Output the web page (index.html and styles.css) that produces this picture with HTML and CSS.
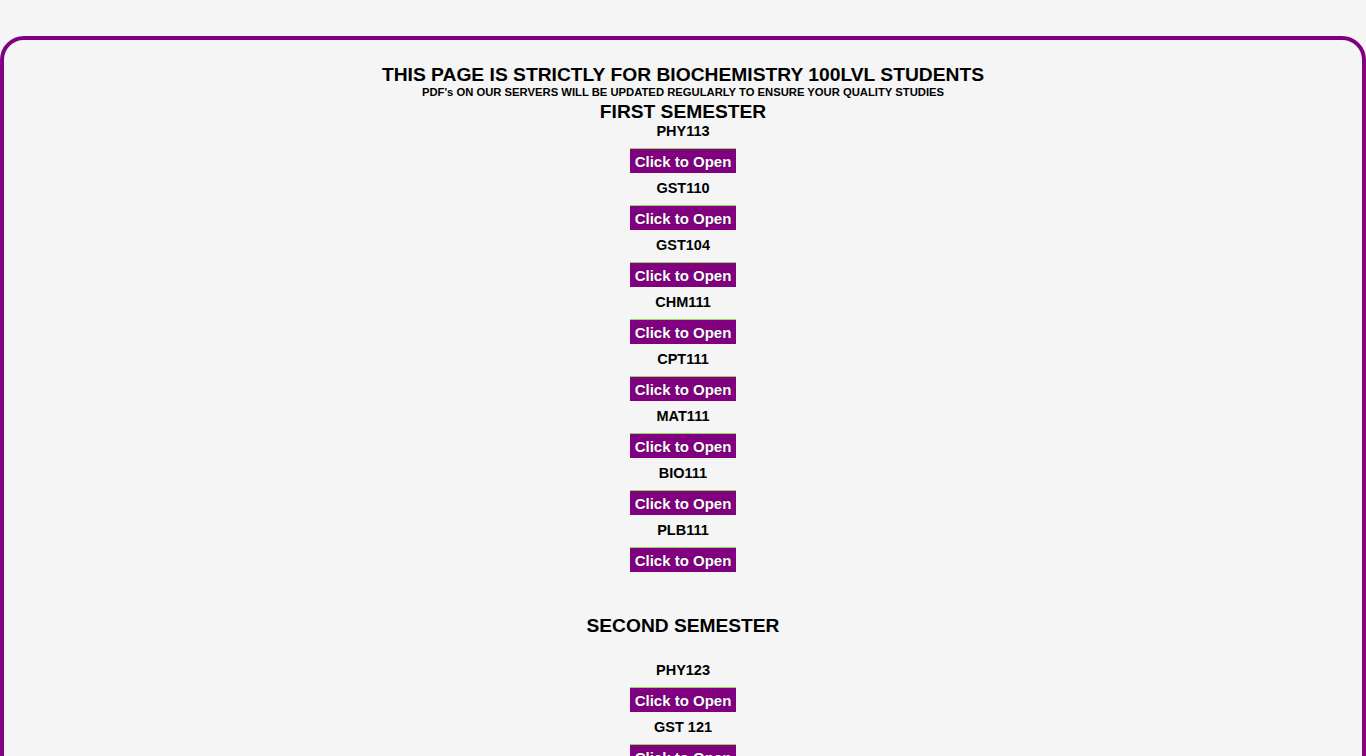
FILE: index.html
```html
<!DOCTYPE html>
<html>
<head>
<meta charset="utf-8">
<link rel="stylesheet" href="styles.css">
</head>
<body>
<div class="frame">
  <h1 class="title">THIS PAGE IS STRICTLY FOR BIOCHEMISTRY 100LVL STUDENTS</h1>
  <p class="sub">PDF's ON OUR SERVERS WILL BE UPDATED REGULARLY TO ENSURE YOUR QUALITY STUDIES</p>
  <h2 class="sem">FIRST SEMESTER</h2>
  <div class="list">
    <div class="item"><div class="code">PHY113</div><a class="btn" href="#">Click to Open</a></div>
    <div class="item"><div class="code">GST110</div><a class="btn" href="#">Click to Open</a></div>
    <div class="item"><div class="code">GST104</div><a class="btn" href="#">Click to Open</a></div>
    <div class="item"><div class="code">CHM111</div><a class="btn" href="#">Click to Open</a></div>
    <div class="item"><div class="code">CPT111</div><a class="btn" href="#">Click to Open</a></div>
    <div class="item"><div class="code">MAT111</div><a class="btn" href="#">Click to Open</a></div>
    <div class="item"><div class="code">BIO111</div><a class="btn" href="#">Click to Open</a></div>
    <div class="item"><div class="code">PLB111</div><a class="btn" href="#">Click to Open</a></div>
  </div>
  <h2 class="sem second">SECOND SEMESTER</h2>
  <div class="list list2">
    <div class="item"><div class="code">PHY123</div><a class="btn" href="#">Click to Open</a></div>
    <div class="item"><div class="code">GST 121</div><a class="btn" href="#">Click to Open</a></div>
    <div class="item"><div class="code">CHM122</div><a class="btn" href="#">Click to Open</a></div>
  </div>
</div>
</body>
</html>
```
FILE: styles.css
```css
html, body {
  margin: 0;
  padding: 0;
  background: #f5f5f5;
}
body {
  padding-top: 36px;
  font-family: "Liberation Sans", Arial, sans-serif;
  color: #000;
}
.frame {
  border: 4px solid #800080;
  border-radius: 24px;
  padding-top: 24px;
  padding-bottom: 40px;
  text-align: center;
  min-height: 900px;
}
.title {
  margin: 0;
  font-size: 19.25px;
  line-height: 21px;
  font-weight: bold;
}
.sub {
  margin: 0;
  font-size: 11.25px;
  line-height: 14px;
  font-weight: bold;
}
.sem {
  margin: 2px 0 0;
  font-size: 19.2px;
  line-height: 22px;
  font-weight: bold;
}
.sem.second {
  margin-top: 36px;
}
.list {
  display: flex;
  flex-direction: column;
  align-items: center;
  margin-top: 0;
}
.list2 {
  margin-top: 25px;
}
.item {
  display: flex;
  flex-direction: column;
  align-items: center;
  padding-bottom: 7px;
}
.code {
  font-size: 14.5px;
  line-height: 16px;
  font-weight: bold;
  margin-bottom: 9px;
}
.btn {
  display: block;
  width: 106px;
  height: 25px;
  box-sizing: border-box;
  border-top: 1px solid #8fd85c;
  background: #800080;
  color: #fff;
  font-size: 15px;
  line-height: 25px;
  font-weight: bold;
  text-decoration: none;
  text-shadow: 0 0 1px rgba(0,0,0,0.6);
}
```
